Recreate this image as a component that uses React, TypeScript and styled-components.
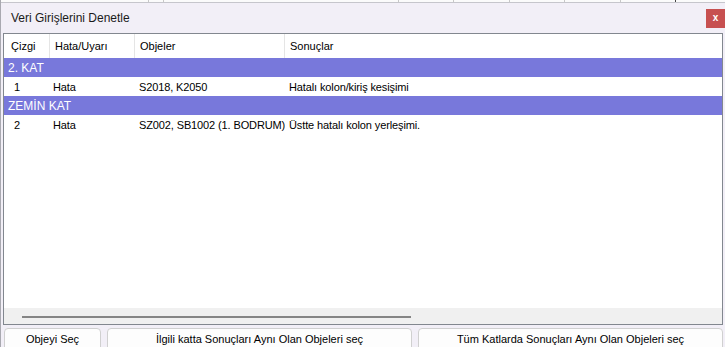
import React from 'react';
import styled, { createGlobalStyle } from 'styled-components';

const GlobalStyle = createGlobalStyle`
  html, body {
    margin: 0;
    padding: 0;
    width: 725px;
    height: 347px;
    overflow: hidden;
    background: #f2eff7;
  }
  * {
    box-sizing: border-box;
  }
`;

type Row =
  | { kind: 'group'; label: string }
  | { kind: 'item'; line: string; type: string; objects: string; result: string };

const rows: Row[] = [
  { kind: 'group', label: '2. KAT' },
  { kind: 'item', line: '1', type: 'Hata', objects: 'S2018, K2050', result: 'Hatalı kolon/kiriş kesişimi' },
  { kind: 'group', label: 'ZEMİN KAT' },
  { kind: 'item', line: '2', type: 'Hata', objects: 'SZ002, SB1002 (1. BODRUM)', result: 'Üstte hatalı kolon yerleşimi.' },
];

// sütun genişlikleri (başlık ve satırlar aynı)
const columns = [
  { title: 'Çizgi', width: 46, pad: 10 },
  { title: 'Hata/Uyarı', width: 85, pad: 3 },
  { title: 'Objeler', width: 150, pad: 4 },
  { title: 'Sonuçlar', width: 437, pad: 4 },
];

const App = (): JSX.Element => {
  return (
    <Window>
      <GlobalStyle />
      <BehindStrip />
      <TitleBar>
        <Title>Veri Girişlerini Denetle</Title>
        <CloseButton>x</CloseButton>
      </TitleBar>
      <Body>
        <ListBox>
          <HeaderRow>
            {columns.map((col, i) => (
              <HeaderCell key={i} $width={col.width} $first={i === 0}>
                {col.title}
              </HeaderCell>
            ))}
          </HeaderRow>
          <Rows>
            {rows.map((row, index) =>
              row.kind === 'group' ? (
                <GroupRow key={index}>{row.label}</GroupRow>
              ) : (
                <ItemRow key={index}>
                  {[row.line, row.type, row.objects, row.result].map((text, i) => (
                    <Cell key={i} $width={columns[i].width} $pad={columns[i].pad}>
                      {text}
                    </Cell>
                  ))}
                </ItemRow>
              )
            )}
          </Rows>
          <HScroll>
            <Thumb />
          </HScroll>
        </ListBox>
        <ButtonBar>
          <Button $width={97}>Objeyi Seç</Button>
          <Button $width={305}>İlgili katta Sonuçları Aynı Olan Objeleri seç</Button>
          <Button $width={305}>Tüm Katlarda Sonuçları Aynı Olan Objeleri seç</Button>
        </ButtonBar>
      </Body>
    </Window>
  );
};

const Window = styled.div`
  width: 725px;
  height: 347px;
  display: flex;
  flex-direction: column;
  background: #f2eff7;
  border-left: 1px solid #a9a9b0;
  font-family: 'Liberation Sans', Arial, sans-serif;
  font-size: 11px;
  color: #000;
  overflow: hidden;
`;

const BehindStrip = styled.div`
  height: 3px;
  flex-shrink: 0;
  background-color: #fbfbfb;
  border-bottom: 1px solid #c6c6cc;
  background-image: linear-gradient(#c8c8c8, #c8c8c8), linear-gradient(#c8c8c8, #c8c8c8),
    linear-gradient(#c8c8c8, #c8c8c8), linear-gradient(#c8c8c8, #c8c8c8),
    linear-gradient(#c8c8c8, #c8c8c8), linear-gradient(#c8c8c8, #c8c8c8),
    linear-gradient(#c8c8c8, #c8c8c8), linear-gradient(#444, #444);
  background-size: 1px 2px;
  background-repeat: no-repeat;
  background-position: 147px 0, 162px 0, 397px 0, 452px 0, 508px 0, 563px 0, 619px 0, 674px 0;
`;

const TitleBar = styled.div`
  height: 30px;
  flex-shrink: 0;
  display: flex;
  align-items: center;
  justify-content: space-between;
  padding-left: 10px;
`;

const Title = styled.div`
  font-size: 12px;
  color: #1a1a1a;
`;

const CloseButton = styled.div`
  width: 19px;
  height: 19px;
  background: #c75050;
  color: #fff;
  font-weight: bold;
  font-size: 10px;
  display: flex;
  align-items: center;
  justify-content: center;
  padding-bottom: 2px;
`;

const Body = styled.div`
  flex: 1;
  display: flex;
  flex-direction: column;
  padding: 0 2px;
`;

const ListBox = styled.div`
  width: 720px;
  height: 292px;
  border: 1px solid #82878f;
  background: #fff;
  display: flex;
  flex-direction: column;
`;

const HeaderRow = styled.div`
  height: 24px;
  display: flex;
  align-items: stretch;
  flex-shrink: 0;
`;

const HeaderCell = styled.div<{ $width: number; $first: boolean }>`
  width: ${(p) => p.$width}px;
  flex-shrink: 0;
  display: flex;
  align-items: center;
  padding-left: ${(p) => (p.$first ? 7 : 5)}px;
  border-right: 1px solid #e5e5e5;
  &:last-child {
    border-right: none;
  }
`;

const Rows = styled.div`
  flex: 1;
  display: flex;
  flex-direction: column;
`;

const GroupRow = styled.div`
  height: 19px;
  background: #7878db;
  color: #fff;
  display: flex;
  align-items: center;
  padding-left: 4px;
  font-size: 12px;
`;

const ItemRow = styled.div`
  height: 19px;
  display: flex;
  align-items: center;
`;

const Cell = styled.div<{ $width: number; $pad: number }>`
  width: ${(p) => p.$width}px;
  flex-shrink: 0;
  padding-left: ${(p) => p.$pad}px;
  white-space: nowrap;
  overflow: hidden;
  letter-spacing: -0.12px;
`;

const HScroll = styled.div`
  height: 16px;
  flex-shrink: 0;
  background: #f0f0f0;
  display: flex;
  align-items: center;
  padding-left: 18px;
  padding-top: 1px;
`;

const Thumb = styled.div`
  width: 389px;
  height: 2px;
  background: #858585;
`;

const ButtonBar = styled.div`
  display: flex;
  gap: 6px;
  padding: 3px 0 0 1px;
`;

const Button = styled.div<{ $width: number }>`
  width: ${(p) => p.$width}px;
  height: 24px;
  flex-shrink: 0;
  background: #fdfdfd;
  border: 1px solid #d0d0d0;
  border-radius: 4px;
  display: flex;
  align-items: center;
  justify-content: center;
  padding-bottom: 2px;
  font-size: 11px;
`;

export default App;
